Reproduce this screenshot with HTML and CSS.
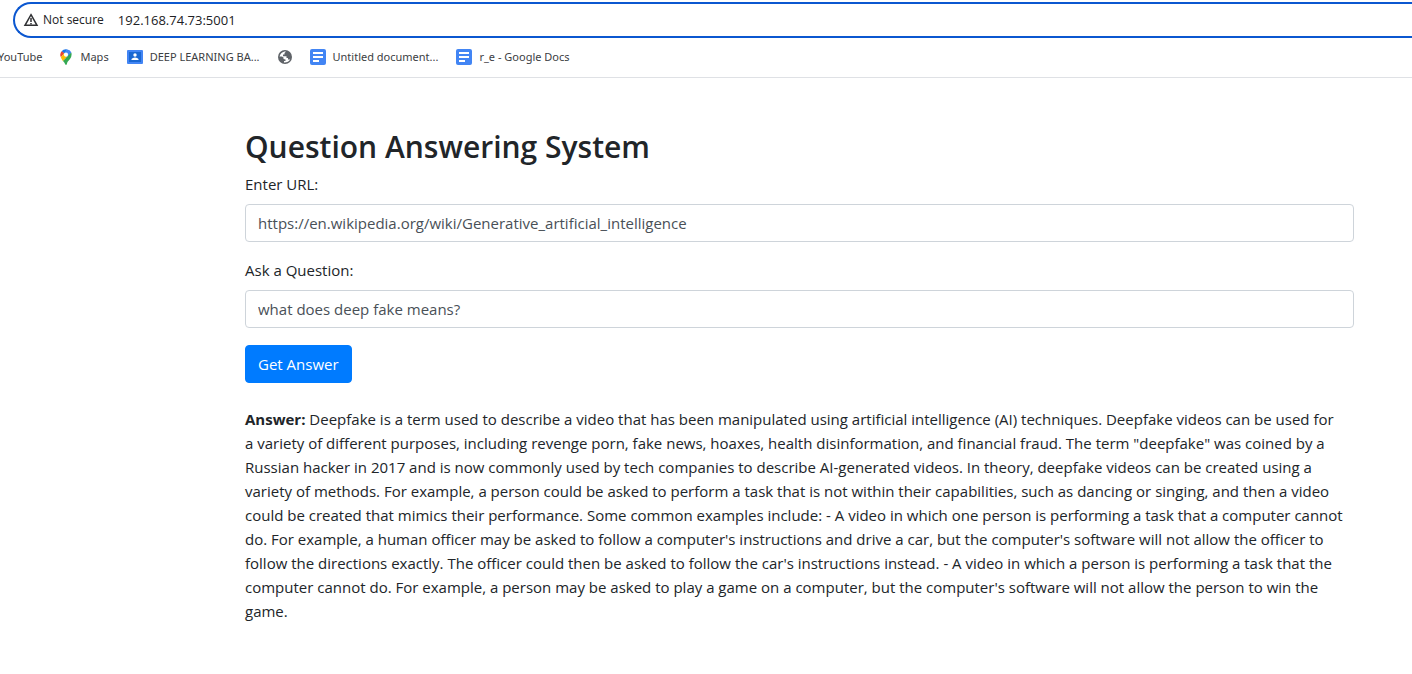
FILE: index.html
```html
<!DOCTYPE html>
<html lang="en">
<head>
<meta charset="utf-8">
<title>Question Answering System</title>
<link rel="stylesheet" href="styles.css">
</head>
<body>
<header class="browser">
  <div class="address">
    <svg class="warn" viewBox="0 0 16 16" aria-hidden="true"><path d="M8 2.700 14 13.300H2Z" fill="none" stroke="#303134" stroke-width="1.500"/><path d="M8 6v4M8 11v1.500" stroke="#303134" stroke-width="1.500"/></svg>
    <span class="secure">Not secure</span>
    <input class="location" type="text" aria-label="Address" value="192.168.74.73:5001">
  </div>
  <nav class="bookmarks">
    <a class="bookmark clipped" href="#youtube">YouTube</a>
    <a class="bookmark" href="#maps"><svg class="pin" viewBox="0 0 12 16" aria-hidden="true"><path d="M6 5.500 9.600 1.300A5.600 5.600 0 0 1 11.300 4L6.500 9.500Z" fill="#4285f4"/><path d="M4.200 4.200 7.400.4a5.600 5.600 0 0 1 2.400 1.100L6 6Z" fill="#4285f4"/><path d="M1.600 2.200A5.700 5.700 0 0 1 7.500.4L4.200 4.400Z" fill="#1a73e8"/><path d="M1.600 2.200 4.300 4.300.9 8.300A5.700 5.700 0 0 1 1.600 2.200Z" fill="#ea4335"/><path d="M4.200 4.300 7.700 7.100 3 12.200Q1.500 10.500.9 8.300Z" fill="#fbbc04"/><path d="M11.300 3.600Q12.300 7 10 10 7.300 12.500 6.800 15.200q-.8 1.400-1.600 0Q4.500 13.500 3 12Z" fill="#34a853"/><circle cx="6" cy="5.700" r="2.100" fill="#fff"/></svg>Maps</a>
    <a class="bookmark" href="#deep-learning"><svg viewBox="0 0 16 16" aria-hidden="true"><rect y="1" width="16" height="14" rx="1" fill="#4285f4"/><rect x="2" y="3" width="12" height="10" fill="#1967d2"/><circle cx="8" cy="6" r="1.700" fill="#fff"/><path d="M4.500 11V10q1-1.500 3.500-1.500t3.500 1.500v1Z" fill="#fff"/></svg>DEEP LEARNING BA...</a>
    <a class="bookmark" href="#site" aria-label="Site"><svg class="globe" viewBox="0 0 14 14" aria-hidden="true"><circle cx="7" cy="7" r="7" fill="#5f6368"/><path d="M1.500 6.500Q2.500 2.500 6.500 1.500H8L6.500 3v1.500H5v1.700h3.500V8H10V9.500h2.200Q10.500 12.600 6 12.500V11H7.500V9.500L5.500 9V7.500L4 6.500Z" fill="#fff"/></svg></a>
    <a class="bookmark" href="#document"><svg viewBox="0 0 16 16" aria-hidden="true"><rect width="16" height="16" rx="2" fill="#4285f4"/><path d="M3 4h10M3 8h10M3 12h6" stroke="#fff" stroke-width="2"/></svg>Untitled document...</a>
    <a class="bookmark" href="#r-e"><svg viewBox="0 0 16 16" aria-hidden="true"><rect width="16" height="16" rx="2" fill="#4285f4"/><path d="M3 4h10M3 8h10M3 12h6" stroke="#fff" stroke-width="2"/></svg>r_e - Google Docs</a>
  </nav>
</header>
<main class="content">
  <h1>Question Answering System</h1>
  <form>
    <div class="field"><label for="url">Enter URL:</label><input id="url" type="text" value="https://en.wikipedia.org/wiki/Generative_artificial_intelligence"></div>
    <div class="field"><label for="question">Ask a Question:</label><input id="question" type="text" value="what does deep fake means?"></div>
    <button type="button">Get Answer</button>
  </form>
  <p class="answer"><strong>Answer:</strong> Deepfake is a term used to describe a video that has been manipulated using artificial intelligence (AI) techniques. Deepfake videos can be used for<br>a variety of different purposes, including revenge porn, fake news, hoaxes, health disinformation, and financial fraud. The term "deepfake" was coined by a<br>Russian hacker in 2017 and is now commonly used by tech companies to describe AI-generated videos. In theory, deepfake videos can be created using a<br>variety of methods. For example, a person could be asked to perform a task that is not within their capabilities, such as dancing or singing, and then a video<br>could be created that mimics their performance. Some common examples include: - A video in which one person is performing a task that a computer cannot<br>do. For example, a human officer may be asked to follow a computer's instructions and drive a car, but the computer's software will not allow the officer to<br>follow the directions exactly. The officer could then be asked to follow the car's instructions instead. - A video in which a person is performing a task that the<br>computer cannot do. For example, a person may be asked to play a game on a computer, but the computer's software will not allow the person to win the<br>game.</p>
</main>
</body>
</html>
```
FILE: styles.css
```css
* { box-sizing: border-box; }
body { margin: 0; background: #fff; color: #212529; font: 15px/24px "Open Sans", sans-serif; }
.browser { padding-top: 2px; border-bottom: 1px solid #dfe1e5; overflow: hidden; font: 12px/16px "Open Sans", sans-serif; color: #3c4043; }
.address { display: flex; align-items: center; height: 36px; margin-left: 13px; padding-left: 8px; border: 2px solid #0b57d0; border-right: 0; border-radius: 18px 0 0 18px; }
.warn { width: 16px; height: 16px; }
.secure { margin-left: 4px; color: #202124; }
.location { flex: 1; margin-left: 14px; padding: 0; border: 0; outline: 0; font: inherit; font-size: 13px; color: #202124; background: transparent; }
.bookmarks { display: flex; align-items: center; gap: 18px; height: 39px; padding-bottom: 2px; white-space: nowrap; font-family: "Noto Sans", sans-serif; font-size: 11px; }
.bookmark { display: flex; align-items: center; gap: 7px; color: inherit; text-decoration: none; }
.bookmark svg { width: 16px; height: 16px; }
.bookmark .pin { width: 12px; margin-right: 1px; }
.bookmark .globe { width: 14px; height: 14px; }
.clipped { margin-left: -2px; }
.content { padding: 50px 58px 48px 245px; }
h1 { margin: 0 0 6px; font-size: 30px; line-height: 38px; font-weight: 600; }
.field { margin-bottom: 16px; }
.field label { display: block; margin-bottom: 8px; }
.field input { display: block; width: 100%; height: 38px; padding: 6px 12px; border: 1px solid #ced4da; border-radius: 4px; font: inherit; color: #495057; }
button { display: block; height: 38px; margin: 17px 0 0; padding: 6px 12px; border: 1px solid #007bff; border-radius: 4px; background: #007bff; color: #fff; font: inherit; }
.answer { margin: 24px 0 0; }
```
